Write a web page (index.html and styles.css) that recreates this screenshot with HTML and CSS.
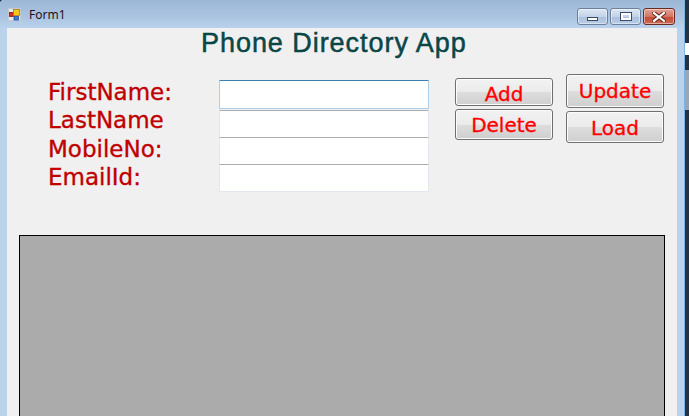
FILE: index.html
```html
<!DOCTYPE html>
<html lang="en">
<head>
    <meta charset="UTF-8">
    <title>Form1</title>
    <link rel="stylesheet" href="styles.css">
</head>
<body>
    <div class="window">
        <div class="titlebar">
            <svg class="app-icon" width="13" height="13" viewBox="0 0 13 13">
                <rect x="0.5" y="0.5" width="12" height="12" fill="#e4e9ef" stroke="#c0c8d0"/>
                <rect x="1.5" y="4.5" width="4" height="4" fill="#d42a1c" stroke="#8a1a10" stroke-width="0.8"/>
                <rect x="5.5" y="1.5" width="6" height="6" fill="#f7c51c" stroke="#b07d08" stroke-width="0.8"/>
                <rect x="6" y="8.5" width="4.5" height="3.5" fill="#3b7ad8" stroke="#1d4e9e" stroke-width="0.8"/>
            </svg>
            <span class="title-text">Form1</span>
            <div class="caption-buttons">
                <div class="cap-btn">
                    <span class="glyph-min"></span>
                </div>
                <div class="cap-btn">
                    <span class="glyph-max"></span>
                </div>
                <div class="cap-btn close">
                    <svg width="14" height="10" viewBox="0 0 14 10">
                        <path d="M2 1 L12 9 M12 1 L2 9" stroke="#5a2218" stroke-width="4" stroke-linecap="square"/>
                        <path d="M2 1 L12 9 M12 1 L2 9" stroke="#ffffff" stroke-width="2.2" stroke-linecap="square"/>
                    </svg>
                </div>
            </div>
        </div>

        <div class="client">
            <h1 class="app-title">Phone Directory App</h1>

            <div class="form-area">
                <div class="labels">
                    <div>FirstName:</div>
                    <div>LastName</div>
                    <div>MobileNo:</div>
                    <div>EmailId:</div>
                </div>
                <div class="inputs">
                    <input type="text" class="txt focused">
                    <input type="text" class="txt second">
                    <input type="text" class="txt">
                    <input type="text" class="txt">
                </div>
                <div class="btn-col first-col">
                    <button class="btn btn-add">Add</button>
                    <button class="btn btn-delete">Delete</button>
                </div>
                <div class="btn-col">
                    <button class="btn btn-update">Update</button>
                    <button class="btn btn-load">Load</button>
                </div>
            </div>

            <!-- data grid -->
            <div class="grid"></div>
        </div>
    </div>
    <div class="backdrop">
        <div class="bd-line"></div>
        <div class="bd-white"></div>
        <div class="bd-gray"></div>
    </div>
</body>
</html>
```

FILE: styles.css
```css
body {
    margin: 0;
    padding: 0;
    background: #233141;
    display: flex;
    height: 416px;
    overflow: hidden;
    font-family: 'DejaVu Sans', Verdana, sans-serif;
}

.window {
    width: 684px;
    height: 416px;
    background: #bad2ec;
    border-top-left-radius: 4px;
    flex-shrink: 0;
    overflow: hidden;
}

/* Title bar */
.titlebar {
    height: 28px;
    display: flex;
    align-items: flex-start;
    background: linear-gradient(#9cb7d6, #aac4e1 60%, #bad2ec);
}

.app-icon {
    margin: 8px 0 0 8px;
}

.title-text {
    font-family: 'Noto Sans', 'Open Sans', sans-serif;
    font-size: 12px;
    color: #1c1020;
    margin: 6px 0 0 8px;
}

.caption-buttons {
    margin-left: auto;
    margin-right: 9px;
    margin-top: 8px;
    display: flex;
    gap: 2px;
}

.cap-btn {
    width: 29px;
    height: 15px;
    border: 1px solid #6f819a;
    border-radius: 3px;
    background: linear-gradient(#dae6f3, #c3d4e8 50%, #a9c0dc 51%, #b8cde6);
    display: flex;
    align-items: center;
    justify-content: center;
    box-shadow: inset 0 0 0 1px rgba(255,255,255,0.45);
}

.cap-btn.close {
    width: 30px;
    border-color: #6a2a22;
    background: linear-gradient(#e4a497, #d27563 50%, #c14a36 51%, #cf6a52);
}

.glyph-min {
    width: 9px;
    height: 2px;
    margin-top: 4px;
    background: #fff;
    border: 1px solid #3b4a60;
}

.glyph-max {
    width: 6px;
    height: 3px;
    border: 2px solid #fff;
    outline: 1px solid #3b4a60;
}

/* Client area */
.client {
    margin: 0 7px;
    height: 388px;
    background: #f0f0f0;
    overflow: hidden;
}

.app-title {
    margin: 0;
    height: 30px;
    padding-left: 194px;
    font-family: 'Liberation Sans', Arial, sans-serif;
    font-weight: normal;
    font-size: 27px;
    letter-spacing: 0.95px;
    line-height: 30px;
    color: #0a4646;
    -webkit-text-stroke: 0.5px #0a4646;
}

.form-area {
    display: flex;
    align-items: flex-start;
    height: 118px;
    margin-top: 16px;
    padding-left: 41px;
}

.labels {
    width: 171px;
    padding-top: 4px;
    font-size: 23px;
    line-height: 28.3px;
    color: #c00000;
    -webkit-text-stroke: 0.35px #c00000;
}

.inputs {
    width: 210px;
    padding-top: 6px;
    display: flex;
    flex-direction: column;
}

.txt {
    box-sizing: border-box;
    margin: -1px 0 0 0;
    width: 210px;
    height: 28px;
    padding: 0 3px;
    background: #fff;
    border: 1px solid #e2e8ef;
    border-top-color: #abadb3;
    border-radius: 1px;
    outline: none;
}

.txt.focused {
    margin-top: 0;
    height: 29px;
    border-color: #aecde8;
    border-top-color: #3c7fb1;
}

.txt.second {
    margin-top: 1px;
}

.btn-col {
    display: flex;
    flex-direction: column;
    width: 98px;
}

.first-col {
    margin-left: 26px;
    margin-right: 13px;
    padding-top: 4px;
}

.btn {
    box-sizing: border-box;
    width: 98px;
    padding: 0;
    border: 1px solid #707070;
    border-radius: 3px;
    background: linear-gradient(#f2f2f2, #ebebeb 50%, #dddddd 51%, #cfcfcf);
    box-shadow: inset 0 0 0 1px #fcfcfc;
    font-family: 'DejaVu Sans', Verdana, sans-serif;
    font-size: 20px;
    color: #ff0000;
    -webkit-text-stroke: 0.3px #ff0000;
    line-height: 22px;
}

.btn-add {
    height: 28px;
    padding-top: 3px;
}

.btn-delete {
    height: 31px;
    margin-top: 3px;
}

.btn-update {
    height: 34px;
}

.btn-load {
    height: 32px;
    margin-top: 3px;
    padding-top: 2px;
}

.grid {
    margin: 43px 0 0 12px;
    width: 646px;
    height: 200px;
    box-sizing: border-box;
    background: #ababab;
    border: 1px solid #000;
}

/* background window peeking on the right */
.backdrop {
    flex: 1;
    position: relative;
    background: #233141;
}

.bd-line {
    position: absolute;
    left: 0;
    top: 0;
    bottom: 0;
    width: 1px;
    background: #7fb4e0;
}

.bd-white {
    position: absolute;
    left: 1px;
    right: 0;
    top: 43px;
    height: 12px;
    background: #ffffff;
}

.bd-gray {
    position: absolute;
    left: 1px;
    right: 0;
    top: 70px;
    height: 40px;
    background: #9aa6b4;
}
```
